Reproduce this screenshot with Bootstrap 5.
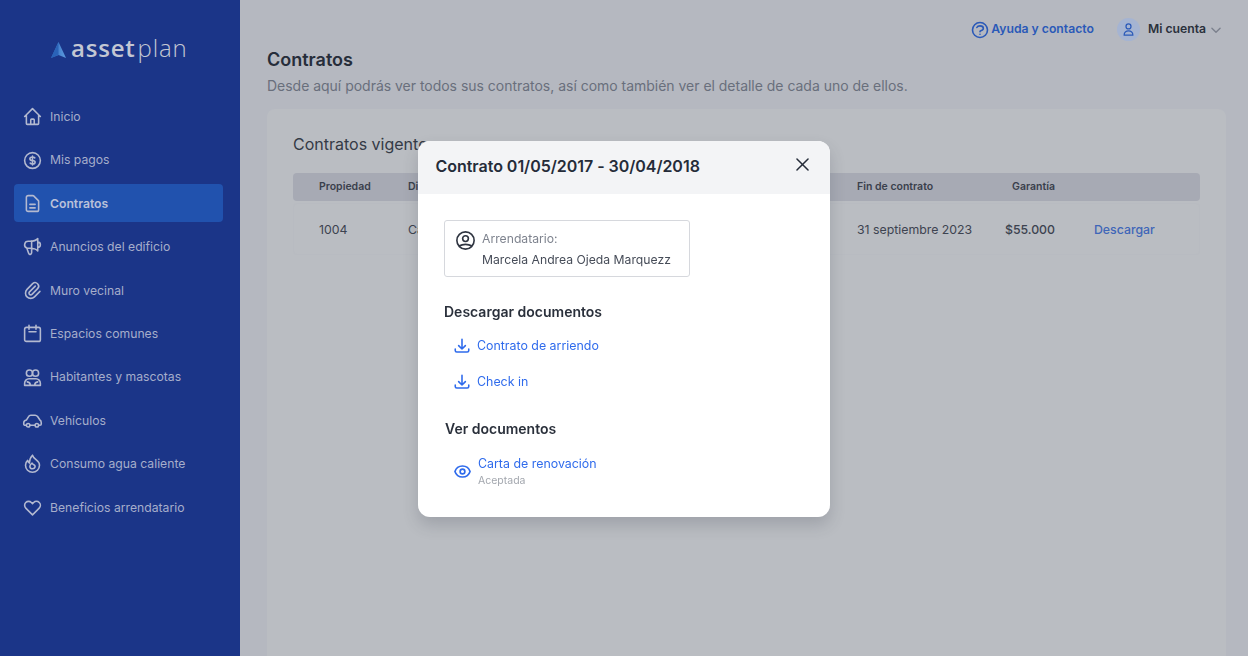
<!doctype html>
<html lang="es"><head><meta charset="utf-8"><title>Contratos</title>
<link href="https://cdn.jsdelivr.net/npm/bootstrap@5.3.0/dist/css/bootstrap.min.css" rel="stylesheet">
<style>
html,body{height:100%;overflow:hidden}
body{font-family:Inter,"Liberation Sans",sans-serif;background:#b5b8c0;color:#2a303b}
svg.ico{fill:none;stroke:currentColor;stroke-width:2;stroke-linecap:round;stroke-linejoin:round;flex:none}
.shell{height:656px;overflow:hidden}
.side{width:240px;background:#1b3588;flex:none}
.brand{height:97.5px;padding-left:50px;padding-top:32px;color:#c3c7d3;font-family:"Open Sans",sans-serif;font-size:24px;line-height:31px;letter-spacing:.8px}
.brand b{font-weight:600}.brand span{font-weight:300;margin-left:2px}
.brand svg{margin-top:10px}
.menu{padding:0 17px 0 14px;gap:5.4px}
.menu a{height:38px;padding:1.5px 8px 0;gap:7px;font-size:12.2px;color:#a6aecb;border-radius:4px;text-decoration:none;display:flex;align-items:center}
.menu a.on{background:#2152ae;color:#b9c1da;font-weight:600}
.menu svg{width:21px;height:21px;stroke-width:1.8;color:#b3b9d0;margin-top:-1px}
.main{padding:0 22px 0 27px;min-width:0;overflow:hidden}
.topbar{height:50px;padding-top:9px;font-size:12.2px;font-weight:600}
.help{color:#2a59b8;text-decoration:none;gap:1.5px;margin-right:23px}
.help svg{width:20px;height:20px;stroke-width:1.9}
.avatar{width:23px;height:23px;background:#a5b4d2;color:#2a59b8;border-radius:50%;margin-right:8px}
.avatar svg{width:15px;height:15px;stroke-width:2}
.chev{width:14px;height:14px;stroke-width:2.4 !important;color:#7c818d;margin-left:3px;margin-right:3px}
.page-t{font-size:18px;font-weight:600;line-height:20px;color:#262d3a;margin:0}
.page-s{font-size:14px;line-height:20px;letter-spacing:-.02px;color:#696f7c;margin:6px 0 13px}
.panel{background:#babdc2;border-radius:8px 8px 0 0;padding:25px 26px;height:547px}
.panel-t{font-size:16px;font-weight:400;line-height:20px;color:#343a46;margin:0 0 19px}
.grid-row{display:grid;grid-template-columns:89px 449px 110px 88px 39px auto;padding-left:26px;align-items:center;white-space:nowrap}
.thead{height:28px;background:#a7aab4;border-radius:4px;font-size:10.5px;font-weight:600;color:#3a404c}
.trow{height:52px;margin-top:2px;padding-top:2px;font-size:12.3px;color:#3d4350;border:1px solid #b8bbc1;border-radius:4px;padding-left:25px}
.trow .amt{font-weight:500;text-align:right}.thead .amt{text-align:right}
.trow a{color:#3f66b8;font-weight:500;text-decoration:none}
.dim{position:fixed;inset:0;display:flex;align-items:center;justify-content:center;backdrop-filter:blur(.4px)}
.dlg{width:412px;height:376px;background:#fff;border-radius:12px;overflow:hidden;box-shadow:0 8px 16px rgba(50,55,70,.2);margin-top:2px}
.dlg-h{height:53px;background:#f3f4f6;padding:0 18px 0 17.5px}
.dlg-h h5{font-size:16px;font-weight:600;margin:-4px 0 0;color:#252c39;line-height:30px;letter-spacing:-.03px}
.xbtn{background:none;border:0;padding:0;color:#252c39;line-height:0;margin-top:-7px}
.xbtn svg{width:19px;height:19px;stroke-width:1.9}
.dlg-b{padding:26px 26px 0}
.who{width:246px;height:57px;border:1px solid #d6d8dd;border-radius:3px;padding:7px 9px;font-size:12.2px;line-height:21px;gap:5px}
.who svg{width:23px;height:23px;stroke-width:1.7;color:#2f3541;margin-top:1px}
.who .k{color:#7e838e}.who .v{color:#464c58;display:block}
.sec{font-size:14px;font-weight:600;line-height:20px;color:#2a303b;margin:0}
.sec-a{margin:25px 0 14px}
.sec-b{margin:27px 0 16px 1px}
.dl{color:#2f6bec;text-decoration:none;font-size:12.4px;gap:6px;padding-left:9px;height:20px}
.dl svg{width:18px;height:18px;stroke-width:2.1}
.dl-first{margin-bottom:16px}
.dl-eye{height:auto}
.dl-eye svg{width:19px;height:19px}
.note{font-size:10.500px;line-height:14px;color:#a3a7ae;display:block;margin-top:.5px}
</style></head><body>
<div class="shell d-flex">
<aside class="side">
 <div class="brand d-flex align-items-start"><svg width="17" height="17" viewBox="0 0 17 17" class="me-1"><defs><linearGradient id="lg" x1="0" x2="1"><stop offset="0" stop-color="#2f6cc0"/><stop offset="1" stop-color="#5d9ade"/></linearGradient></defs><path d="M8.500 0L16 16l-7.500-3L1 16z" fill="url(#lg)"/><path d="M1 16L8.500 0v13z" fill="#2a63b8"/></svg><div><b>asset</b><span>plan</span></div></div>
 <nav class="menu nav flex-column">
  <a href="#"><svg class="ico" viewBox="0 0 24 24"><path d="M3 12l2-2m0 0l7-7 7 7M5 10v10a1 1 0 001 1h3m10-11l2 2m-2-2v10a1 1 0 01-1 1h-3m-6 0a1 1 0 001-1v-4a1 1 0 011-1h2a1 1 0 011 1v4a1 1 0 001 1m-6 0h6"/></svg>Inicio</a>
  <a href="#"><svg class="ico" viewBox="0 0 24 24"><path d="M12 8c-1.657 0-3 .895-3 2s1.343 2 3 2 3 .895 3 2-1.343 2-3 2m0-8c1.110 0 2.080.402 2.599 1M12 8V7m0 1v8m0 0v1m0-1c-1.110 0-2.080-.402-2.599-1M21 12a9 9 0 11-18 0 9 9 0 0118 0z"/></svg>Mis pagos</a>
  <a href="#" class="on"><svg class="ico" viewBox="0 0 24 24"><path d="M9 13h6m-6 4h6m2 4H7a2 2 0 01-2-2V5a2 2 0 012-2h5.586a1 1 0 01.707.293l5.414 5.414a1 1 0 01.293.707V19a2 2 0 01-2 2z"/></svg>Contratos</a>
  <a href="#"><svg class="ico" viewBox="0 0 24 24"><path d="M11 5.882V19.240a1.760 1.760 0 01-3.417.592l-2.147-6.150M18 13a3 3 0 100-6M5.436 13.683A4.001 4.001 0 017 6h1.832c4.100 0 7.625-1.234 9.168-3v14c-1.543-1.766-5.067-3-9.168-3H7a3.988 3.988 0 01-1.564-.317z"/></svg>Anuncios del edificio</a>
  <a href="#"><svg class="ico" viewBox="0 0 24 24"><path d="M15.172 7l-6.586 6.586a2 2 0 102.828 2.828l6.414-6.586a4 4 0 00-5.656-5.656l-6.415 6.585a6 6 0 108.486 8.486L20.500 13"/></svg>Muro vecinal</a>
  <a href="#"><svg class="ico" viewBox="0 0 24 24"><rect x="3" y="5" width="18" height="16" rx="2"/><path d="M8 2.500V7M16 2.500V7M8 10h8"/></svg>Espacios comunes</a>
  <a href="#"><svg class="ico" viewBox="0 0 24 24"><circle cx="8.500" cy="7" r="3.500"/><circle cx="15.500" cy="7" r="3.500"/><path d="M3 21v-2.500A5 5 0 018 13.500h8a5 5 0 015 5V21zM9.500 21a4 4 0 00-3.500-4M14.500 21a4 4 0 013.500-4"/></svg>Habitantes y mascotas</a>
  <a href="#"><svg class="ico" viewBox="0 0 24 24"><path d="M5 17.500H3.500A1.500 1.500 0 012 16v-1.500c0-1.500 1-2.500 3-3l2.500-4C8 6.500 9 6 10 6h5c1 0 2 .500 2.800 1.500l2.700 4c1 .500 1.500 1.500 1.500 3V16a1.500 1.500 0 01-1.500 1.500H19M9 17.500h6"/><circle cx="7" cy="17.500" r="2"/><circle cx="17" cy="17.500" r="2"/></svg>Vehículos</a>
  <a href="#"><svg class="ico" viewBox="0 0 24 24"><path d="M12 2.500c.500 2.500 2 3.500 4 5 2.500 1.800 4 3.800 4 6.500a8 8 0 01-16 0c0-2.300 1-4.200 2.500-5.500.300 1.500 1 2.500 2 3 0-3.500 1.500-7 3.500-9z"/><path d="M12 18a3 3 0 01-3-3c0-1.500 1-2.500 2.500-3.500.300 1 1 1.500 2 2 .900.500 1.500 1.200 1.500 1.900a3 3 0 01-3 2.600z"/></svg>Consumo agua caliente</a>
  <a href="#"><svg class="ico" viewBox="0 0 24 24"><path d="M4.318 6.318a4.500 4.500 0 000 6.364L12 20.364l7.682-7.682a4.500 4.500 0 00-6.364-6.364L12 7.636l-1.318-1.318a4.500 4.500 0 00-6.364 0z"/></svg>Beneficios arrendatario</a>
 </nav>
</aside>
<main class="main flex-grow-1">
 <div class="topbar d-flex align-items-center justify-content-end">
  <a href="#" class="help d-flex align-items-center"><svg class="ico" viewBox="0 0 24 24"><path d="M8.228 9c.549-1.165 2.030-2 3.772-2 2.210 0 4 1.343 4 3 0 1.400-1.278 2.575-3.006 2.907-.542.104-.994.540-.994 1.093m0 3h.010M21 12a9 9 0 11-18 0 9 9 0 0118 0z"/></svg>Ayuda y contacto</a>
  <span class="avatar d-flex align-items-center justify-content-center"><svg class="ico" viewBox="0 0 24 24"><path d="M16 7a4 4 0 11-8 0 4 4 0 018 0zM12 14a7 7 0 00-7 7h14a7 7 0 00-7-7z"/></svg></span>
  <span>Mi cuenta</span><svg class="ico chev" viewBox="0 0 24 24"><path d="M19 9l-7 7-7-7"/></svg>
 </div>
 <h1 class="page-t">Contratos</h1>
 <p class="page-s">Desde aquí podrás ver todos sus contratos, así como también ver el detalle de cada uno de ellos.</p>
 <section class="panel">
  <h2 class="panel-t">Contratos vigentes</h2>
  <div class="grid-row thead"><span>Propiedad</span><span>Dirección</span><span>Fin de contrato</span><span class="amt">Garantía</span><span></span><span></span></div>
  <div class="grid-row trow"><span>1004</span><span>Calle 10</span><span>31 septiembre 2023</span><span class="amt">$55.000</span><span></span><a href="#">Descargar</a></div>
 </section>
</main>
</div>
<div class="dim">
 <div class="dlg">
  <div class="dlg-h d-flex justify-content-between align-items-center"><h5>Contrato 01/05/2017 - 30/04/2018</h5><button class="xbtn" aria-label="Cerrar"><svg class="ico" viewBox="0 0 24 24"><path d="M5 19L19 5M5 5l14 14"/></svg></button></div>
  <div class="dlg-b">
   <div class="who d-flex"><svg class="ico" viewBox="0 0 24 24"><path d="M5.121 17.804A13.937 13.937 0 0112 16c2.500 0 4.847.655 6.879 1.804M15 10a3 3 0 11-6 0 3 3 0 016 0zm6 2a9 9 0 11-18 0 9 9 0 0118 0z"/></svg><div><span class="k">Arrendatario:</span><span class="v">Marcela Andrea Ojeda Marquezz</span></div></div>
   <h6 class="sec sec-a">Descargar documentos</h6>
   <a href="#" class="dl dl-first d-flex align-items-center"><svg class="ico" viewBox="0 0 24 24"><path d="M3 16v2a2 2 0 002 2h14a2 2 0 002-2v-2M7.500 11.500L12 16l4.500-4.500M12 3v13"/></svg>Contrato de arriendo</a>
   <a href="#" class="dl d-flex align-items-center"><svg class="ico" viewBox="0 0 24 24"><path d="M3 16v2a2 2 0 002 2h14a2 2 0 002-2v-2M7.500 11.500L12 16l4.500-4.500M12 3v13"/></svg>Check in</a>
   <h6 class="sec sec-b">Ver documentos</h6>
   <a href="#" class="dl dl-eye d-flex align-items-center"><svg class="ico" viewBox="0 0 24 24"><path d="M15 12a3 3 0 11-6 0 3 3 0 016 0z"/><path d="M2.458 12C3.732 7.943 7.523 5 12 5c4.478 0 8.268 2.943 9.542 7-1.274 4.057-5.064 7-9.542 7-4.477 0-8.268-2.943-9.542-7z"/></svg><span>Carta de renovación<span class="note">Aceptada</span></span></a>
  </div>
 </div>
</div>
<script src="https://cdn.jsdelivr.net/npm/bootstrap@5.3.0/dist/js/bootstrap.bundle.min.js"></script>
</body></html>
